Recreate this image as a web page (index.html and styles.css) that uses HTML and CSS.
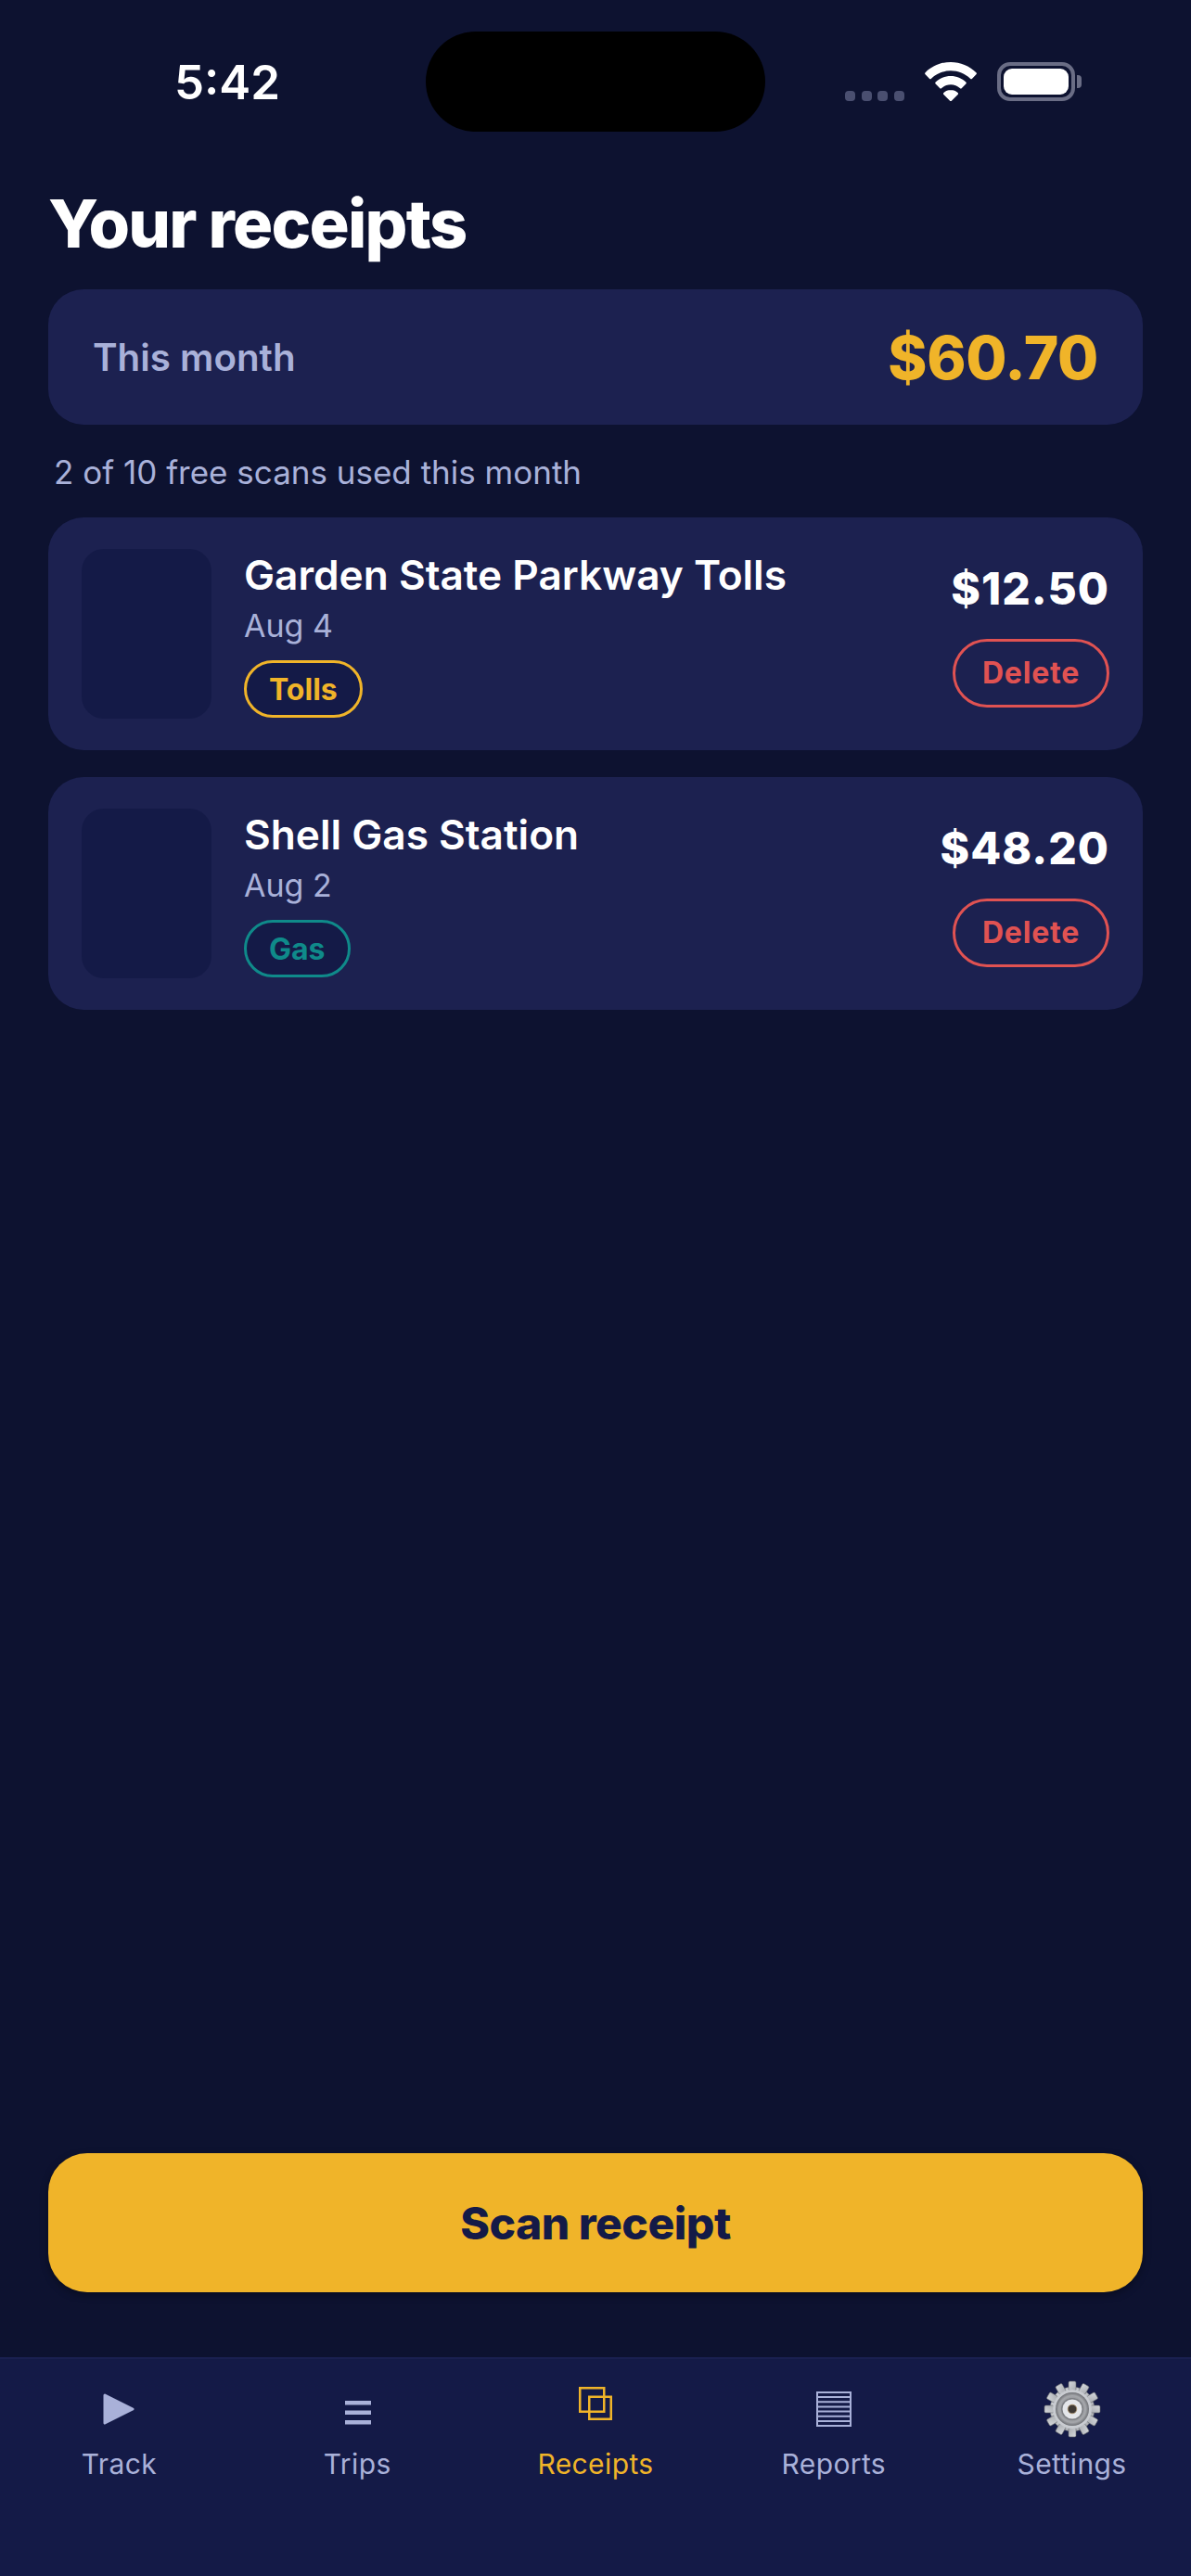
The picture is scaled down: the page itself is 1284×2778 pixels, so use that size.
FILE: index.html
```html
<!DOCTYPE html>
<html lang="en">
<head>
<meta charset="utf-8">
<title>Your receipts</title>
<link rel="stylesheet" href="styles.css">
</head>
<body>
<div class="screen">
  <header class="status">
    <span class="time">5:42</span>
    <div class="island"></div>
    <div class="status-icons">
      <div class="signal"><i></i><i></i><i></i><i></i></div>
      <svg class="wifi" width="56" height="42" viewBox="0 0 56 42"><path fill="#fff" d="M28 0C17.5 0 8 4 0.6 11.2a1.5 1.5 0 0 0 0 2.1l4.3 4.5a1.5 1.5 0 0 0 2.1 0C12.5 12.4 20 9.3 28 9.3s15.5 3.1 21 8.5a1.5 1.5 0 0 0 2.1 0l4.3-4.5a1.5 1.5 0 0 0 0-2.1C48 4 38.5 0 28 0zM28 15c-6.3 0-12 2.4-16.3 6.5a1.5 1.5 0 0 0 0 2.1l4.4 4.5a1.5 1.5 0 0 0 2.1 0c2.6-2.4 6-3.8 9.8-3.8s7.2 1.4 9.8 3.8a1.5 1.5 0 0 0 2.1 0l4.4-4.5a1.5 1.5 0 0 0 0-2.1C40 17.4 34.3 15 28 15zM28 30c-3 0-5.6 1.1-7.6 3a1.5 1.5 0 0 0 0 2.1l6.5 6.5a1.5 1.5 0 0 0 2.2 0l6.5-6.5a1.5 1.5 0 0 0 0-2.1c-2-1.9-4.6-3-7.6-3z"/></svg>
      <div class="battery"><div class="battery-body"><div class="battery-fill"></div></div><div class="battery-cap"></div></div>
    </div>
  </header>

  <main class="content">
    <h1 class="title">Your receipts</h1>
    <section class="summary">
      <span class="summary-label">This month</span>
      <span class="summary-value">$60.70</span>
    </section>
    <p class="quota">2 of 10 free scans used this month</p>
    <ul class="list">
      <li class="row">
        <div class="thumb"></div>
        <div class="info">
          <div class="name">Garden State Parkway Tolls</div>
          <div class="date">Aug 4</div>
          <span class="tag tag-tolls">Tolls</span>
        </div>
        <div class="side">
          <div class="amount">$12.50</div>
          <button class="delete">Delete</button>
        </div>
      </li>
      <li class="row">
        <div class="thumb"></div>
        <div class="info">
          <div class="name">Shell Gas Station</div>
          <div class="date">Aug 2</div>
          <span class="tag tag-gas">Gas</span>
        </div>
        <div class="side">
          <div class="amount">$48.20</div>
          <button class="delete">Delete</button>
        </div>
      </li>
    </ul>
    <button class="scan">Scan receipt</button>
  </main>

  <nav class="tabs">
    <div class="tab">
      <div class="tab-icon"><svg class="i-play" width="34" height="34" viewBox="0 0 34 34"><path fill="#a9b1d9" stroke="#a9b1d9" stroke-width="3" stroke-linejoin="round" d="M2 2 L32 17 L2 32 Z"/></svg></div>
      <span class="tab-label">Track</span>
    </div>
    <div class="tab">
      <div class="tab-icon"><svg class="i-menu" width="28" height="26" viewBox="0 0 28 26"><rect width="28" height="4.5" y="0" fill="#a9b1d9"/><rect width="28" height="4.5" y="10.5" fill="#a9b1d9"/><rect width="28" height="4.5" y="21" fill="#a9b1d9"/></svg></div>
      <span class="tab-label">Trips</span>
    </div>
    <div class="tab tab-active">
      <div class="tab-icon"><svg class="i-copy" width="36" height="36" viewBox="0 0 36 36" fill="none" stroke="#f0b429" stroke-width="2.5"><rect x="1.25" y="1.25" width="26" height="25.5"/><rect x="11.25" y="10.75" width="23.5" height="24"/></svg></div>
      <span class="tab-label">Receipts</span>
    </div>
    <div class="tab">
      <div class="tab-icon"><svg class="i-report" width="38" height="38" viewBox="0 0 38 38" fill="none" stroke="#a9b1d9" stroke-width="2"><rect x="1" y="1" width="36" height="36"/><path d="M1 6.1H37M1 11.3H37M1 16.4H37M1 21.6H37M1 26.7H37M1 31.9H37"/></svg></div>
      <span class="tab-label">Reports</span>
    </div>
    <div class="tab">
      <div class="tab-icon"><svg class="i-gear" width="62" height="62" viewBox="-31 -31 62 62">
        <defs>
          <radialGradient id="hub" cx="50%" cy="50%" r="50%"><stop offset="0.5" stop-color="#8b8d92"/><stop offset="0.8" stop-color="#a5a7ab"/><stop offset="1" stop-color="#6f7176"/></radialGradient>
          <linearGradient id="body" x1="0" y1="0" x2="1" y2="1"><stop offset="0" stop-color="#d5d8dc"/><stop offset="1" stop-color="#a9acb1"/></linearGradient>
        </defs>
        <g fill="url(#body)" stroke="#5e6168" stroke-width="0.6">
          <circle r="24"/>
          <rect x="-4" y="-30" width="8" height="10" rx="1.5"/>
          <rect x="-4" y="-30" width="8" height="10" rx="1.5" transform="rotate(30)"/>
          <rect x="-4" y="-30" width="8" height="10" rx="1.5" transform="rotate(60)"/>
          <rect x="-4" y="-30" width="8" height="10" rx="1.5" transform="rotate(90)"/>
          <rect x="-4" y="-30" width="8" height="10" rx="1.5" transform="rotate(120)"/>
          <rect x="-4" y="-30" width="8" height="10" rx="1.5" transform="rotate(150)"/>
          <rect x="-4" y="-30" width="8" height="10" rx="1.5" transform="rotate(180)"/>
          <rect x="-4" y="-30" width="8" height="10" rx="1.5" transform="rotate(210)"/>
          <rect x="-4" y="-30" width="8" height="10" rx="1.5" transform="rotate(240)"/>
          <rect x="-4" y="-30" width="8" height="10" rx="1.5" transform="rotate(270)"/>
          <rect x="-4" y="-30" width="8" height="10" rx="1.5" transform="rotate(300)"/>
          <rect x="-4" y="-30" width="8" height="10" rx="1.5" transform="rotate(330)"/>
        </g>
        <circle r="21" fill="#c9ccd1"/>
        <circle r="18" fill="url(#hub)"/>
        <circle r="12" fill="#7d7f84"/>
        <circle r="10.5" fill="#e4e6ea"/>
        <circle r="4.8" fill="#3f3a36"/>
        <circle r="4.8" fill="none" stroke="#a98f6a" stroke-width="0.8"/>
      </svg></div>
      <span class="tab-label">Settings</span>
    </div>
  </nav>
</div>
</body>
</html>
```

FILE: styles.css
```css
* { box-sizing: border-box; }
html, body { margin: 0; padding: 0; }
body { background: #0d1230; font-family: Inter, "Liberation Sans", sans-serif; color: #fff; }
.screen { width: 1284px; height: 2778px; display: flex; flex-direction: column; background: #0d1230; }

.status { height: 176px; flex: none; position: relative; }
.time { position: absolute; left: 188px; top: 60px; font-size: 51px; line-height: 58px; font-weight: 600; }
.island { position: absolute; left: 459px; top: 34px; width: 366px; height: 108px; border-radius: 54px; background: #000; }
.status-icons { position: absolute; left: 911px; top: 67px; display: flex; align-items: flex-end; }
.signal { display: flex; gap: 6.5px; margin-right: 22px; }
.signal i { width: 11px; height: 11px; border-radius: 4px; background: #4a4f70; display: block; }
.wifi { display: block; }
.battery { display: flex; align-items: center; margin-left: 22px; }
.battery-body { width: 84px; height: 42px; border: 4px solid #6a6d85; border-radius: 14px; padding: 3px; }
.battery-fill { width: 100%; height: 100%; background: #fff; border-radius: 9px; }
.battery-cap { width: 5px; height: 14px; margin-left: 2px; background: #6a6d85; border-radius: 0 4px 4px 0; }

.content { flex: 1; display: flex; flex-direction: column; padding: 0 52px 70px; min-height: 0; }
.title { margin: 22px 0 0; font-size: 72px; line-height: 86px; font-weight: 800; letter-spacing: -1.8px; }
.summary { margin-top: 28px; height: 146px; flex: none; display: flex; align-items: center; justify-content: space-between; padding: 0 48px; background: #1c2150; border-radius: 38px; }
.summary-label { font-size: 40.3px; font-weight: 600; color: #a9b1d9; }
.summary-value { font-size: 64px; font-weight: 800; color: #f0b429; letter-spacing: -0.3px; }
.quota { margin: 30px 0 0 6px; font-size: 35px; line-height: 42px; color: #a9b1d9; }
.list { list-style: none; margin: 28px 0 0; padding: 0; display: flex; flex-direction: column; gap: 29px; }
.row { height: 251px; display: flex; align-items: center; padding: 0 36px; background: #1c2150; border-radius: 38px; }
.thumb { width: 140px; height: 183px; flex: none; border-radius: 24px; background: #141a47; }
.info { margin-left: 35px; flex: 1; min-width: 0; display: flex; flex-direction: column; align-items: flex-start; }
.name { font-size: 44.2px; line-height: 54px; font-weight: 600; }
.date { margin-top: 7px; font-size: 34px; line-height: 42px; color: #a9b1d9; }
.tag { margin-top: 16px; height: 62px; padding: 0 24px; display: flex; align-items: center; border: 3px solid; border-radius: 31px; font-size: 32px; font-weight: 700; background: #141a47; }
.tag-tolls { color: #f0b429; border-color: #f0b429; }
.tag-gas { color: #0f8a8a; border-color: #0f8a8a; }
.side { display: flex; flex-direction: column; align-items: flex-end; }
.amount { font-size: 48px; line-height: 60px; font-weight: 800; letter-spacing: 1px; }
.delete { margin-top: 24px; width: 169px; height: 74px; padding: 0; background: transparent; border: 3px solid #e05252; border-radius: 37px; color: #e05252; font-family: inherit; font-size: 32px; font-weight: 700; letter-spacing: 0.8px; }
.scan { margin-top: auto; height: 150px; flex: none; width: 100%; background: #f0b429; border: 0; border-radius: 42px; box-shadow: 0 3px 8px rgba(0, 0, 0, 0.35); color: #141a47; font-family: inherit; font-size: 48px; font-weight: 800; letter-spacing: -0.5px; }

.tabs { height: 236px; flex: none; display: flex; background: #141a47; border-top: 2px solid #1a2050; }
.tab { flex: 1; display: flex; flex-direction: column; align-items: center; padding-top: 20px; }
.tab-icon { height: 68px; width: 100%; display: flex; align-items: center; justify-content: center; }
.i-menu { margin-top: 7px; margin-left: 1px; }
.i-copy { margin-bottom: 13px; }
.tab-label { margin-top: 7px; font-size: 30px; line-height: 36px; color: #a9b1d9; letter-spacing: 0.4px; }
.tab-active .tab-label { color: #f0b429; }
```
